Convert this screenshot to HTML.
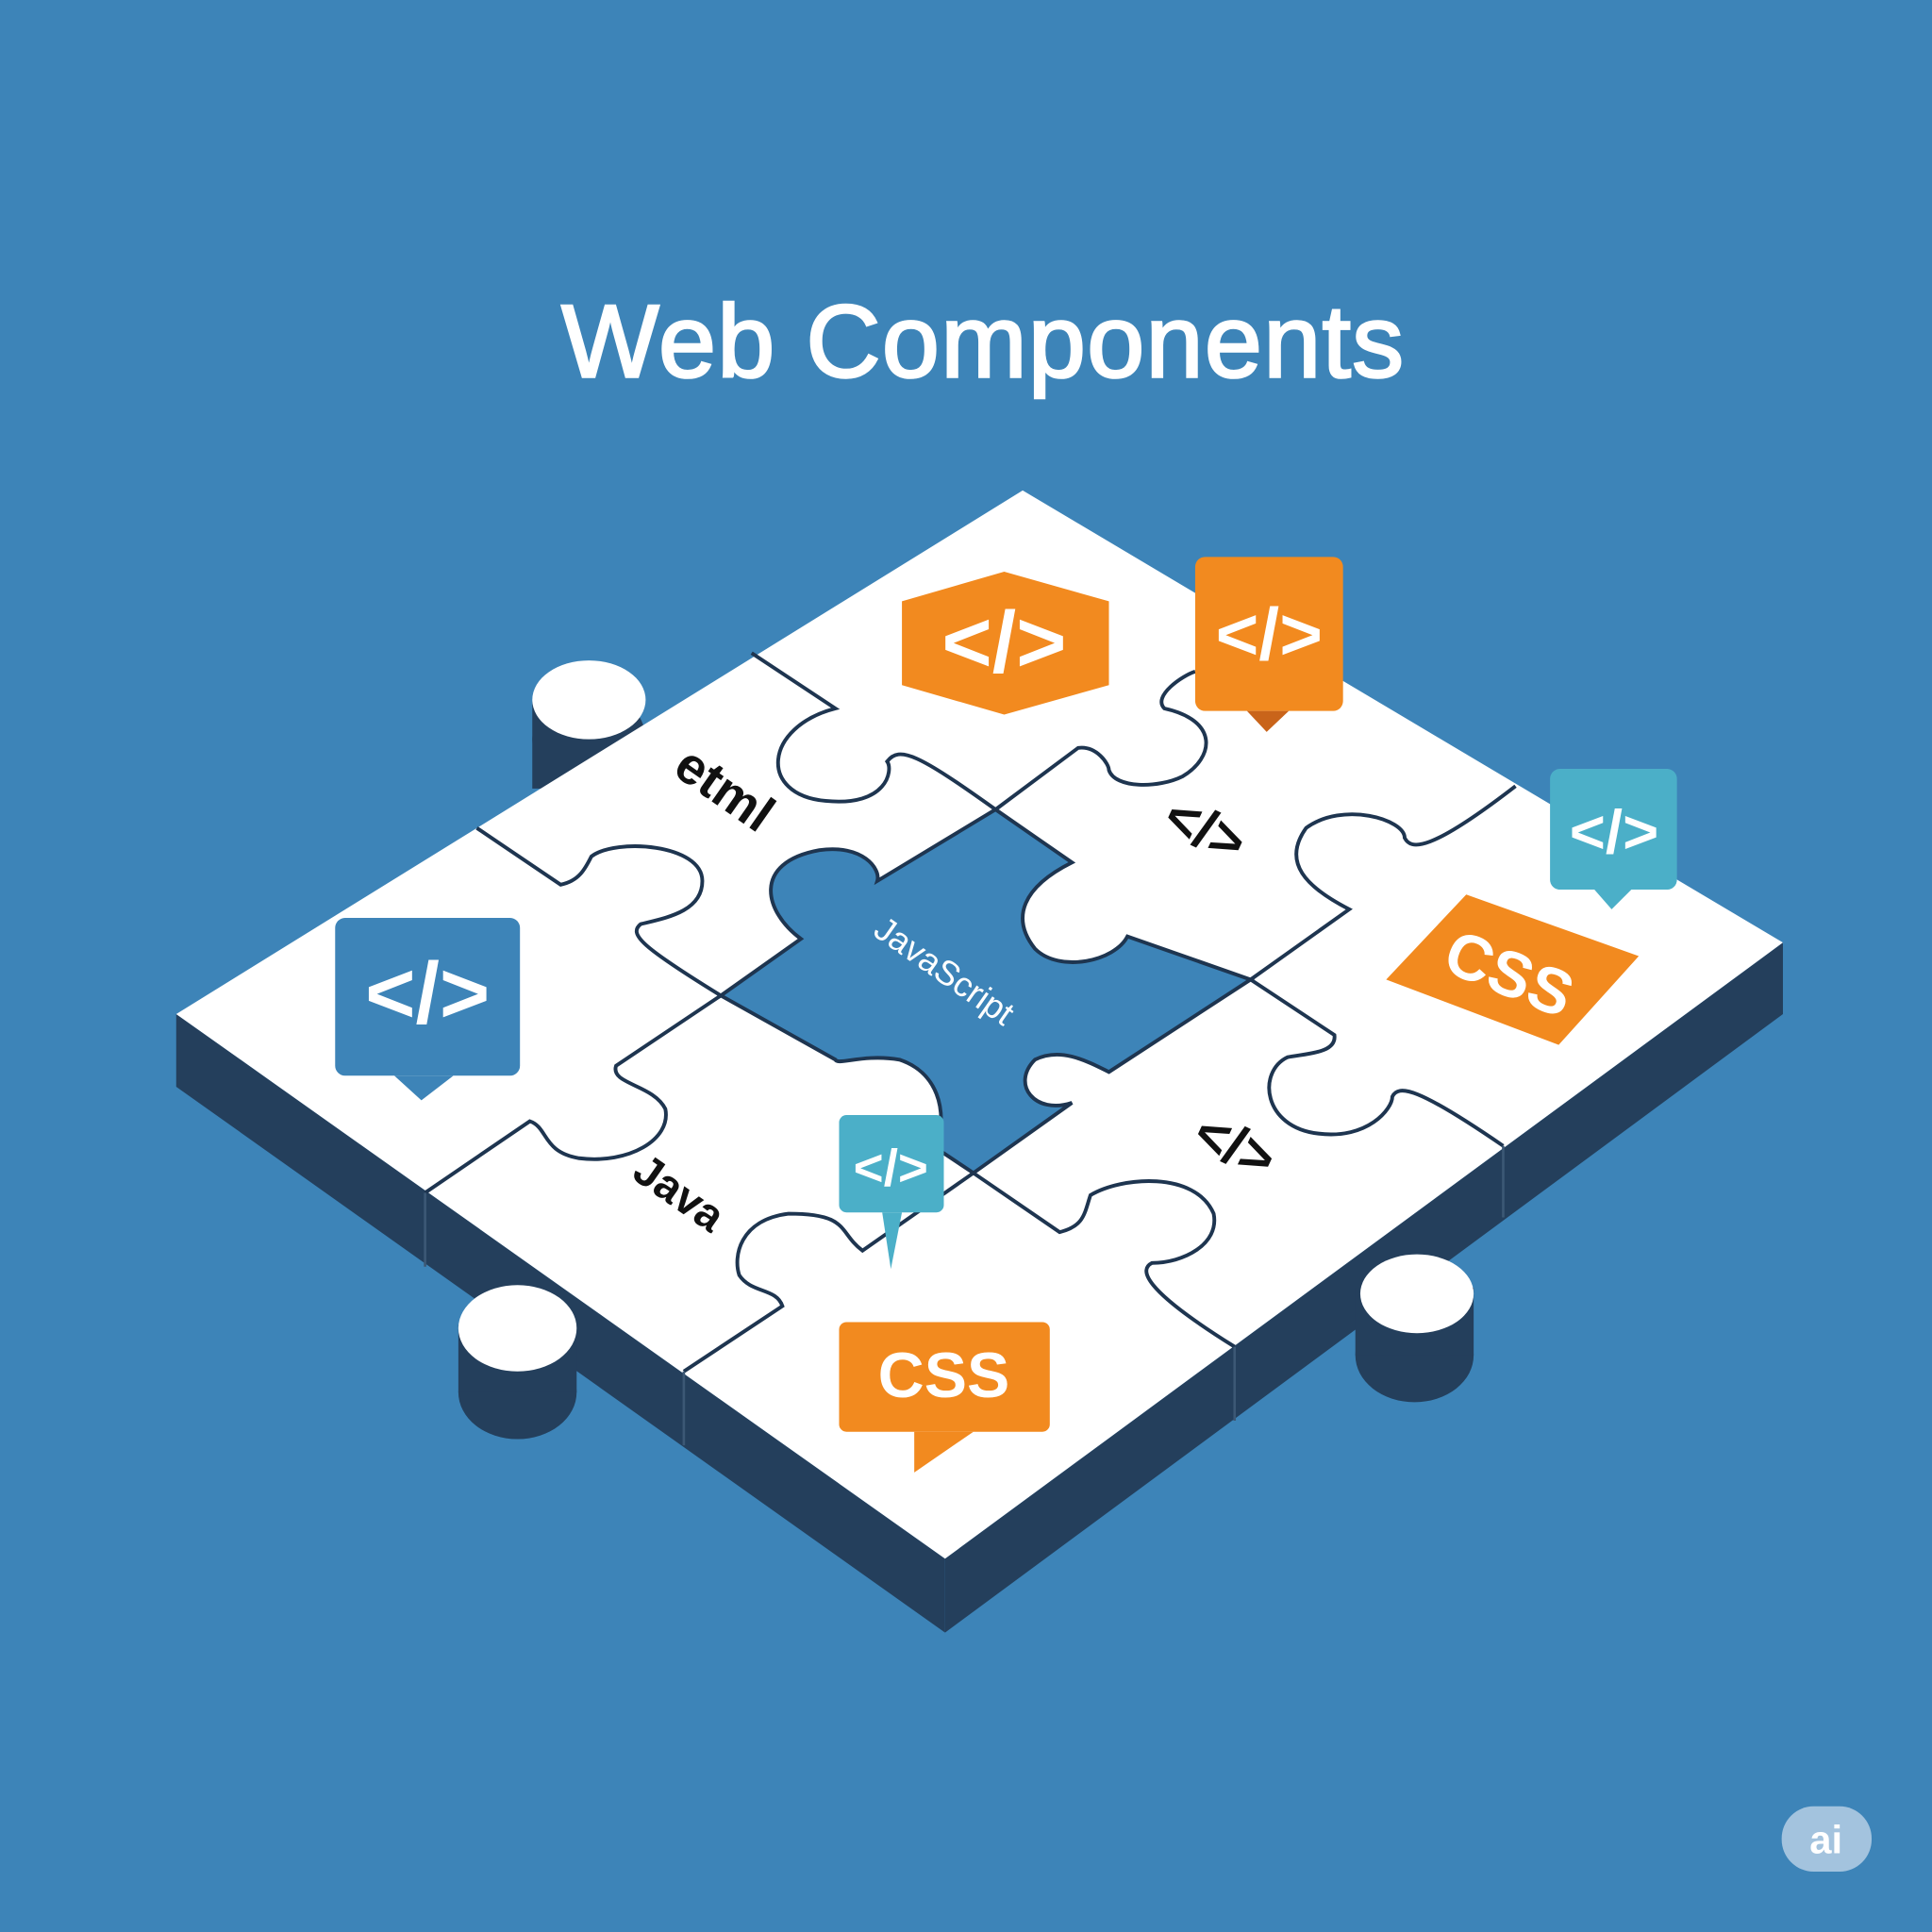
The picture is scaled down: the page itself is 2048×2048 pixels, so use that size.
<!DOCTYPE html>
<html><head><style>
html,body{margin:0;padding:0;background:#3d84b8;}
svg{display:block}
text{font-family:"Liberation Sans","DejaVu Sans",sans-serif}
</style></head><body>
<svg width="2048" height="2048" viewBox="0 0 1568 1568" xmlns="http://www.w3.org/2000/svg">
<rect width="1568" height="1568" fill="#3d84b8"/>
<text x="798" y="306" text-anchor="middle" font-size="84" fill="#fff" stroke="#fff" stroke-width="2" letter-spacing="1">Web Components</text>
<!-- side faces -->
<polygon points="143,823 767,1265 767,1325 143,882" fill="#243f5c"/>
<polygon points="767,1265 1447,765 1447,823 767,1325" fill="#243f5c"/>
<!-- tabs with depth -->
<ellipse cx="478" cy="600" rx="46" ry="40" fill="#243f5c"/>
<rect x="432" y="570" width="60" height="70" fill="#243f5c"/>
<ellipse cx="478" cy="568" rx="46" ry="32" fill="#fff"/>
<ellipse cx="420" cy="1130" rx="48" ry="38" fill="#243f5c"/>
<rect x="372" y="1075" width="96" height="55" fill="#243f5c"/>
<ellipse cx="420" cy="1078" rx="48" ry="35" fill="#fff"/>
<ellipse cx="1148" cy="1100" rx="48" ry="38" fill="#243f5c"/>
<rect x="1100" y="1045" width="96" height="55" fill="#243f5c"/>
<ellipse cx="1150" cy="1050" rx="46" ry="32" fill="#fff"/>
<!-- top face -->
<polygon points="830,398 1447,765 767,1265 143,823" fill="#fff"/>
<!-- center hole -->
<g fill="#3d84b8" stroke="#1e3550" stroke-width="3">
<path d="M585,808 L650,762 C620,740 610,700 665,690 C700,685 715,705 712,715 L808,657 L870,700 C830,720 820,745 840,770 C860,790 905,780 915,760 L1015,795 L900,870 C880,860 860,850 840,860 C820,880 840,905 870,895 L790,952 L760,932 C770,900 760,870 730,860 C700,855 680,865 678,860 Z"/>
</g>
<!-- puzzle lines -->
<g fill="none" stroke="#1e3550" stroke-width="3">
<path d="M610,530 L678,575 C620,590 615,645 670,650 C720,655 725,625 720,618 C730,605 745,612 808,657"/>
<path d="M808,657 L875,607 C890,605 900,620 900,625 C905,640 940,640 960,630 C985,615 990,585 945,575 C935,565 960,548 970,545"/>
<path d="M387,672 L455,718 C470,715 475,705 480,695 C500,680 570,685 570,715 C570,740 540,745 520,750 C510,758 520,768 585,808"/>
<path d="M1015,795 L1095,738 C1060,720 1040,700 1060,672 C1090,650 1140,665 1140,680 C1145,690 1160,692 1230,638"/>
<path d="M585,808 L500,865 C495,880 530,880 540,900 C545,925 510,945 470,940 C440,935 445,915 430,910 L345,968"/>
<path d="M1015,795 L1083,840 C1085,855 1060,855 1045,858 C1020,870 1025,915 1070,920 C1110,925 1130,900 1130,890 C1135,880 1150,882 1220,930"/>
<path d="M790,952 L860,1000 C880,995 880,985 885,970 C910,955 970,950 985,985 C990,1010 960,1025 935,1025 C925,1030 925,1045 1002,1093"/>
<path d="M790,952 L700,1015 C680,1000 690,985 640,985 C600,990 595,1020 600,1035 C610,1050 630,1045 635,1060 L555,1113"/>
<path d="M345,968 L345,1028 M555,1113 L555,1173 M1002,1093 L1002,1153 M1220,930 L1220,988" stroke="#3c5875" stroke-width="2"/>
</g>
<!-- orange hexagon -->
<polygon points="732,488 815,464 900,488 900,556 815,580 732,556" fill="#f28a1f"/>
<text x="815" y="545" text-anchor="middle" font-size="70" fill="#fff" font-weight="bold">&lt;/&gt;</text>
<!-- orange bubble -->
<rect x="970" y="452" width="120" height="125" rx="8" fill="#f28a1f"/>
<polygon points="1012,577 1046,577 1028,594" fill="#c9641a"/>
<text x="1030" y="535" text-anchor="middle" font-size="60" fill="#fff" font-weight="bold">&lt;/&gt;</text>
<!-- teal bubble right -->
<rect x="1258" y="624" width="103" height="98" rx="8" fill="#4bafc8"/>
<polygon points="1294,722 1324,722 1308,738" fill="#4bafc8"/>
<text x="1310" y="692" text-anchor="middle" font-size="50" fill="#fff" font-weight="bold">&lt;/&gt;</text>
<!-- blue bubble left -->
<rect x="272" y="745" width="150" height="128" rx="8" fill="#3d84b8"/>
<polygon points="320,873 368,873 342,893" fill="#3d84b8"/>
<text x="347" y="830" text-anchor="middle" font-size="70" fill="#fff" font-weight="bold">&lt;/&gt;</text>
<!-- orange CSS tilted -->
<polygon points="1190,726 1330,776 1265,848 1125,795" fill="#f28a1f"/>
<text x="1225" y="808" text-anchor="middle" font-size="52" fill="#fff" font-weight="bold" font-family="Liberation Mono" transform="rotate(22 1225 790)">CSS</text>
<!-- teal small bubble -->
<rect x="681" y="905" width="85" height="79" rx="6" fill="#4bafc8"/>
<polygon points="716,984 732,984 723,1030" fill="#4bafc8"/>
<text x="723" y="962" text-anchor="middle" font-size="42" fill="#fff" font-weight="bold">&lt;/&gt;</text>
<!-- orange CSS bubble -->
<rect x="681" y="1073" width="171" height="89" rx="6" fill="#f28a1f"/>
<polygon points="742,1162 790,1162 742,1195" fill="#f28a1f"/>
<text x="766" y="1134" text-anchor="middle" font-size="52" fill="#fff" font-weight="bold" font-family="Liberation Mono">CSS</text>
<!-- labels -->
<text x="580" y="652" text-anchor="middle" font-size="42" fill="#111" font-weight="bold" transform="rotate(35 580 652)">etml</text>
<text x="975" y="688" text-anchor="middle" font-size="46" fill="#111" font-weight="bold" transform="rotate(25 975 680)">&lt;/&gt;</text>
<text x="765" y="797" text-anchor="middle" font-size="28" fill="#fff" transform="rotate(35 765 790)">JavaScript</text>
<text x="550" y="980" text-anchor="middle" font-size="36" fill="#111" font-weight="bold" transform="rotate(35 550 970)">Java</text>
<text x="1000" y="945" text-anchor="middle" font-size="46" fill="#111" font-weight="bold" transform="rotate(25 1000 935)">&lt;/&gt;</text>
<!-- ai badge -->
<rect x="1446" y="1466" width="73" height="53" rx="26" fill="#a3c3de"/>
<text x="1482" y="1504" text-anchor="middle" font-size="32" fill="#fff" font-weight="bold">ai</text>
</svg>
</body></html>
